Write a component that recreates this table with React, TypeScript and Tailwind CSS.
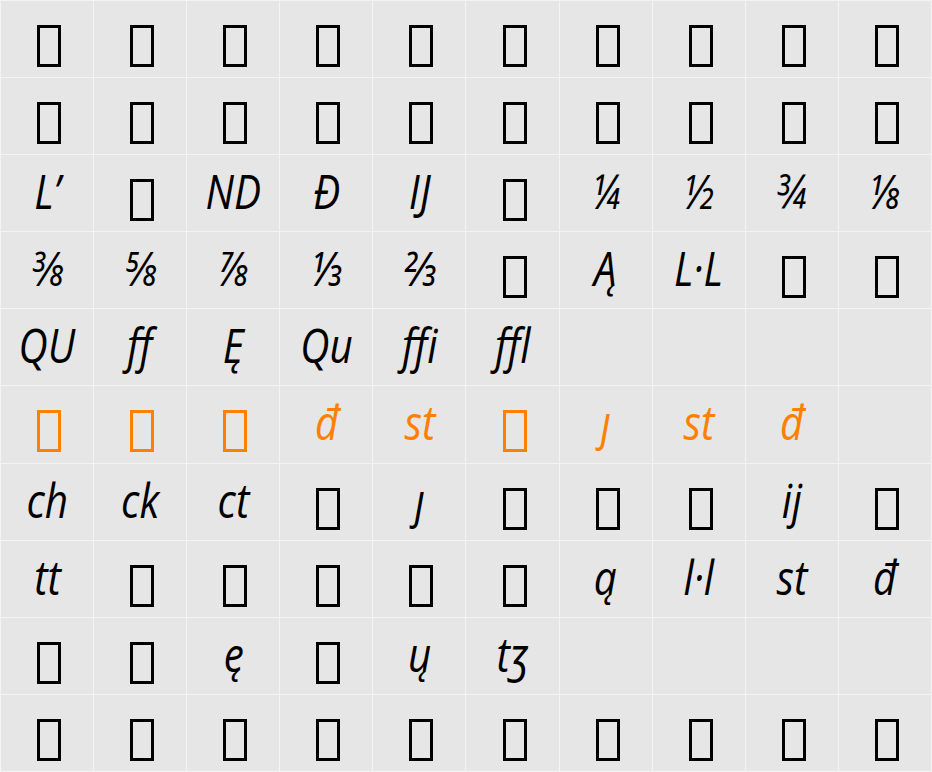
import React from 'react';

// 'T' = missing glyph box, '' = empty cell
const ROWS: string[][] = [
  ['T', 'T', 'T', 'T', 'T', 'T', 'T', 'T', 'T', 'T'],
  ['T', 'T', 'T', 'T', 'T', 'T', 'T', 'T', 'T', 'T'],
  ['L’', 'T', 'ND', 'Đ', 'IJ', 'T', '¼', '½', '¾', '⅛'],
  ['⅜', '⅝', '⅞', '⅓', '⅔', 'T', 'Ą', 'L·L', 'T', 'T'],
  ['QU', 'ff', 'Ę', 'Qu', 'ffi', 'ffl', '', '', '', ''],
  ['T', 'T', 'T', 'đ', 'st', 'T', 'ȷ', 'st', 'đ', ''],
  ['ch', 'ck', 'ct', 'T', 'ȷ', 'T', 'T', 'T', 'ij', 'T'],
  ['tt', 'T', 'T', 'T', 'T', 'T', 'ą', 'l·l', 'st', 'đ'],
  ['T', 'T', 'ę', 'T', 'ų', 'tʒ', '', '', '', ''],
  ['T', 'T', 'T', 'T', 'T', 'T', 'T', 'T', 'T', 'T'],
];

function Cell({ v, orange }: { v: string; orange: boolean }) {
  const color = orange ? 'text-[#ff7f00] border-[#ff7f00]' : 'text-black border-black';
  return (
    <div className="bg-[#e6e6e6] flex justify-center items-start overflow-hidden">
      {v === 'T' ? (
        <span className={`block w-[24px] h-[42px] border-[3px] mt-[24px] ml-[4px] ${color}`} />
      ) : v ? (
        <span
          className={`block italic font-normal text-[47px] leading-[46px] pt-[13px] scale-x-[0.86] ${color}`}
          style={{ fontFamily: '"Open Sans", "Noto Sans", "DejaVu Sans", sans-serif' }}
        >
          {v}
        </span>
      ) : null}
    </div>
  );
}

export default function App() {
  return (
    <div className="w-[932px] h-[772px] bg-[#f4f4f4] p-px grid grid-cols-10 grid-rows-10 gap-px">
      {ROWS.map((row, r) =>
        row.map((v, c) => <Cell key={`${r}-${c}`} v={v} orange={r === 5} />)
      )}
    </div>
  );
}
